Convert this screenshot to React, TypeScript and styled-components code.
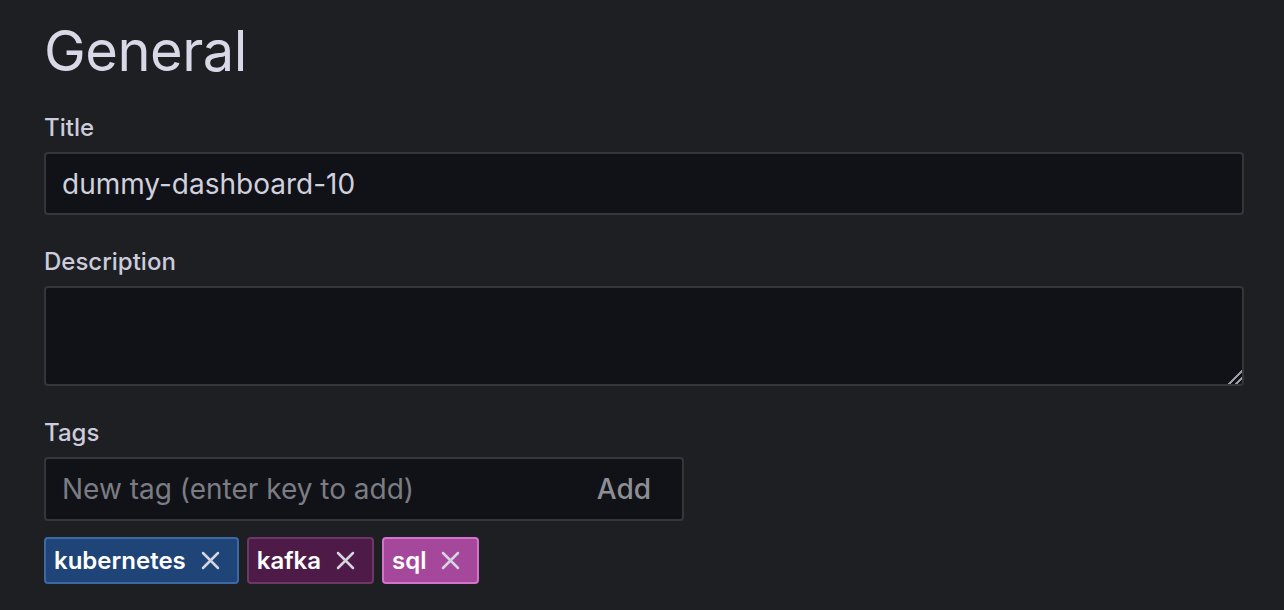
import React from 'react'
import styled, { createGlobalStyle } from 'styled-components'

const GlobalStyle = createGlobalStyle`
  html, body {
    margin: 0;
    padding: 0;
    background: #1e1f23;
    color-scheme: dark;
  }
  body {
    font-family: Inter, "Noto Sans", sans-serif;
    color: #ccccdc;
  }
`

const Page = styled.div`
  padding: 16px 40px 0 44px;
  height: 610px;
  box-sizing: border-box;
  overflow: hidden;
`

const Heading = styled.h2`
  margin: 0 0 27px;
  font-size: 56px;
  line-height: 70px;
  font-weight: 400;
  color: #d8d8e6;
  letter-spacing: -0.5px;
`

const Field = styled.div`
  display: flex;
  flex-direction: column;
  margin-bottom: 32px;
`

const Label = styled.label`
  font-size: 24px;
  line-height: 30px;
  font-weight: 500;
  color: #ccccdc;
  margin-bottom: 9px;
`

const TextInput = styled.input`
  box-sizing: border-box;
  width: 1200px;
  height: 63px;
  padding: 0 16px;
  background: #111217;
  border: 2px solid #35363c;
  border-radius: 4px;
  color: #d0d0de;
  font-family: Inter, sans-serif;
  font-size: 28px;
  outline: none;
`

const TextArea = styled.textarea`
  box-sizing: border-box;
  width: 1200px;
  height: 100px;
  padding: 12px 16px;
  background: #111217;
  border: 2px solid #35363c;
  border-radius: 4px;
  color: #ccccdc;
  font-family: Inter, sans-serif;
  font-size: 28px;
  outline: none;
  resize: vertical;
  display: block;

  &::-webkit-resizer {
    background:
      linear-gradient(135deg, transparent 52%, #9a9aa2 52%, #9a9aa2 62%, transparent 62%,
        transparent 74%, #9a9aa2 74%, #9a9aa2 84%, transparent 84%);
  }
`

const TagField = styled.div`
  display: flex;
  flex-direction: column;
`

const TagInputBox = styled.div`
  box-sizing: border-box;
  display: flex;
  align-items: center;
  width: 640px;
  height: 64px;
  background: #111217;
  border: 2px solid #35363c;
  border-radius: 4px;
`

const TagInput = styled.input`
  flex: 1;
  min-width: 0;
  height: 100%;
  padding: 0 16px;
  background: transparent;
  border: none;
  color: #ccccdc;
  font-family: Inter, sans-serif;
  font-size: 28px;
  outline: none;

  &::placeholder {
    color: #7c7d84;
  }
`

const AddButton = styled.button`
  background: transparent;
  border: none;
  padding: 0 31px 0 16px;
  height: 100%;
  color: #8e8f96;
  font-family: Inter, sans-serif;
  font-size: 28px;
  font-weight: 500;
  cursor: pointer;
`

const TagList = styled.div`
  display: flex;
  gap: 8px;
  margin-top: 16px;
`

const Tag = styled.span<{ $bg: string; $border: string }>`
  box-sizing: border-box;
  display: inline-flex;
  align-items: center;
  gap: 15px;
  height: 47px;
  padding: 0 17px 0 8px;
  background: ${(p) => p.$bg};
  border: 2px solid ${(p) => p.$border};
  border-radius: 4px;
  color: #ffffff;
  font-size: 24px;
  font-weight: 600;
`

const RemoveIcon = () => (
  <svg width="19" height="19" viewBox="0 0 19 19" fill="none">
    <path d="M2 2 L17 17 M17 2 L2 17" stroke="#d5d5e0" strokeWidth="2.5" strokeLinecap="round" />
  </svg>
)

const tags = [
  { name: 'kubernetes', bg: '#1f4478', border: '#3b69a5' },
  { name: 'kafka', bg: '#4e1b48', border: '#6d3766' },
  { name: 'sql', bg: '#a5489c', border: '#d373c9' },
]

const App = () => (
  <>
    <GlobalStyle />
    <Page>
      <Heading>General</Heading>
      <Field>
        <Label>Title</Label>
        <TextInput defaultValue="dummy-dashboard-10" />
      </Field>
      <Field>
        <Label>Description</Label>
        <TextArea />
      </Field>
      <TagField>
        <Label>Tags</Label>
        <TagInputBox>
          <TagInput placeholder="New tag (enter key to add)" />
          <AddButton>Add</AddButton>
        </TagInputBox>
        <TagList>
          {tags.map((t) => (
            <Tag key={t.name} $bg={t.bg} $border={t.border}>
              {t.name}
              <RemoveIcon />
            </Tag>
          ))}
        </TagList>
      </TagField>
    </Page>
  </>
)

export default App
